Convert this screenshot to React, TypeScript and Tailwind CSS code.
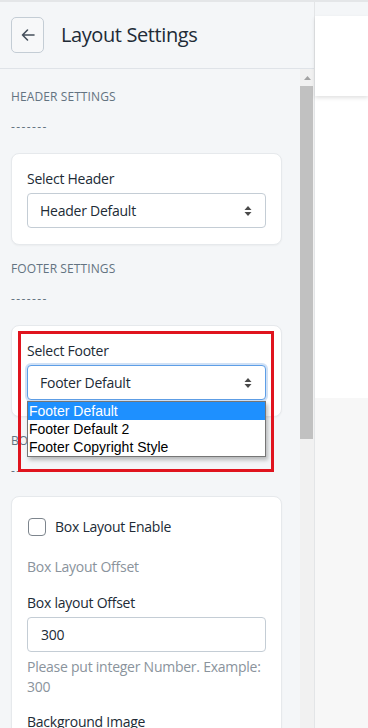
import React from 'react';

const font = { fontFamily: '"Open Sans", "Noto Sans", sans-serif' };

const SectionTitle: React.FC<{ title: string; dashes: string; first?: boolean }> = ({ title, dashes, first }) => (
  <div className={first ? 'pt-[20px]' : 'pt-[16px]'}>
    <div className="text-[12px] leading-[16px] text-[#637381] uppercase tracking-[0.1px]">{title}</div>
    <div className="mt-[14px] text-[12px] leading-[16px] text-[#637381] tracking-[1.4px]">{dashes}</div>
  </div>
);

const SelectArrows: React.FC = () => (
  <svg width="8" height="12" viewBox="0 0 8 12" className="fill-[#4a4a4a]">
    <path d="M4 1 L7.5 5 H0.5 Z" />
    <path d="M4 11 L7.5 7 H0.5 Z" />
  </svg>
);

const App: React.FC = () => {
  return (
    <div className="w-[368px] h-[728px] overflow-hidden flex border-t-2 border-[#e4e6e8] bg-[#f4f6f8] text-[#212b36]" style={font}>
      {/* settings panel */}
      <div className="w-[315px] shrink-0 flex flex-col border-r border-[#e3e5e7]">
        <div className="h-[67px] shrink-0 flex items-center px-[11px] border-b border-[#dfe3e8]">
          <button className="w-[33px] h-[36px] rounded-[5px] border border-[#c4cdd5] bg-[#f7f8f9] flex items-center justify-center text-[#454f5b]">
            <svg width="16" height="16" viewBox="0 0 16 16" fill="none" stroke="currentColor" strokeWidth="1.6" strokeLinecap="round" strokeLinejoin="round">
              <path d="M14 8H2.5M7.5 3L2.5 8l5 5" />
            </svg>
          </button>
          <h1 className="ml-[17px] text-[20px] leading-[28px] text-[#212b36] tracking-[-0.4px]">Layout Settings</h1>
        </div>

        <div className="flex-1 flex min-h-0">
          <div className="w-[300px] shrink-0 relative overflow-hidden pl-[11px] pr-[18px] text-[14px] tracking-[-0.25px]">
            <SectionTitle first title="Header Settings" dashes="-------" />
            <div className="mt-[18px] bg-white rounded-[8px] border border-[#e6e9ec] shadow-[0_1px_2px_rgba(0,0,0,0.04)] px-[15px] pt-[15px] pb-[16px]">
              <div className="leading-[20px]">Select Header</div>
              <div className="mt-[4px] h-[35px] rounded-[4px] border border-[#c4cdd5] bg-white flex items-center justify-between pl-[12px] pr-[13px]">
                <span>Header Default</span>
                <SelectArrows />
              </div>
            </div>

            <SectionTitle title="Footer Settings" dashes="-------" />
            <div className="mt-[18px] bg-white rounded-[8px] border border-[#e6e9ec] shadow-[0_1px_2px_rgba(0,0,0,0.04)] px-[15px] pt-[15px] pb-[16px]">
              <div className="leading-[20px]">Select Footer</div>
              <div className="relative mt-[4px]">
                <div className="h-[35px] rounded-[4px] border border-[#5e9ee6] shadow-[0_0_0_2px_rgba(120,170,230,0.35)] bg-white flex items-center justify-between pl-[12px] pr-[13px]">
                  <span>Footer Default</span>
                  <SelectArrows />
                </div>
                <div className="absolute left-0 right-0 top-[36px] z-10 bg-white border border-[#767676] shadow-[2px_3px_4px_rgba(0,0,0,0.25)] text-[14px] tracking-normal text-black" style={{ fontFamily: '"Liberation Sans", Arial, sans-serif' }}>
                  <div className="h-[18px] leading-[18px] pl-[1px] bg-[#1e90ff] text-white">Footer Default</div>
                  <div className="h-[18px] leading-[18px] pl-[1px]">Footer Default 2</div>
                  <div className="h-[18px] leading-[18px] pl-[1px]">Footer Copyright Style</div>
                </div>
              </div>
            </div>

            <SectionTitle title="Box Layout Settings" dashes="----------" />
            <div className="mt-[17px] bg-white rounded-[8px] border border-[#e6e9ec] shadow-[0_1px_2px_rgba(0,0,0,0.04)] px-[15px] pt-[20px] pb-[16px]">
              <div className="flex items-center">
                <span className="w-[18px] h-[18px] ml-[1px] rounded-[4px] border-[1.5px] border-[#7d858d] bg-white" />
                <span className="ml-[9px] leading-[20px]">Box Layout Enable</span>
              </div>
              <div className="mt-[20px] leading-[20px] text-[#8a939c]">Box Layout Offset</div>
              <div className="mt-[16px] leading-[20px]">Box layout Offset</div>
              <div className="mt-[4px] h-[35px] rounded-[4px] border border-[#c4cdd5] bg-white flex items-center pl-[13px]">300</div>
              <div className="mt-[5px] leading-[20px] text-[#8a939c]">Please put integer Number. Example: 300</div>
              <div className="mt-[15px] leading-[20px]">Background Image</div>
            </div>

            {/* annotation box */}
            <div className="absolute left-[18px] top-[262px] w-[256px] h-[141px] border-[3px] border-[#e0141e] pointer-events-none z-20" />
          </div>

          {/* scrollbar */}
          <div className="w-[14px] shrink-0 bg-[#f1f1f1] flex flex-col">
            <div className="h-[17px] flex items-center justify-center">
              <svg width="7" height="4" viewBox="0 0 7 4" className="fill-[#a3a3a3]"><path d="M3.5 0L7 4H0Z" /></svg>
            </div>
            <div className="h-[353px] w-[13px] bg-[#c1c1c1]" />
          </div>
        </div>
      </div>

      {/* preview area */}
      <div className="flex-1 flex flex-col bg-white">
        <div className="h-[14px] bg-[#f4f6f8]" />
        <div className="h-[80px] bg-white shadow-[0_2px_4px_rgba(0,0,0,0.12)] relative z-10" />
        <div className="h-[302px] bg-white" />
        <div className="flex-1 bg-[#f7f7f7]" />
      </div>
    </div>
  );
};

export default App;
